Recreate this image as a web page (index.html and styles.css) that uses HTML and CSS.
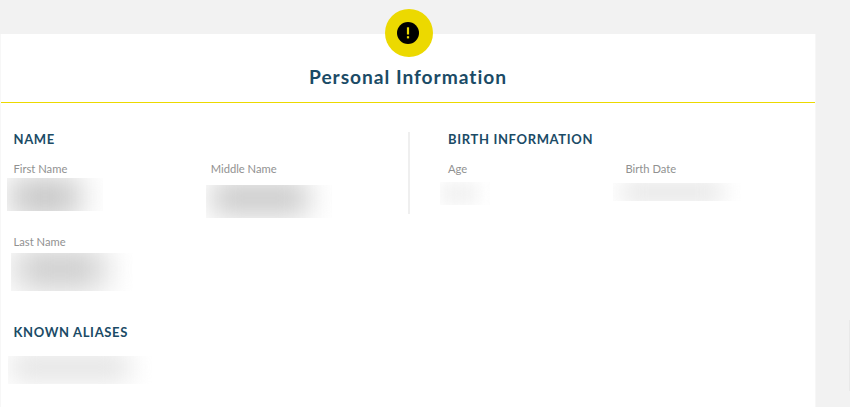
FILE: index.html
```
<!DOCTYPE html>
<html lang="en">
  <head>
    <meta charset="UTF-8" />
    <meta name="viewport" content="width=device-width, initial-scale=1.0" />
    <title>Personal Information</title>
    <link rel="stylesheet" href="styles.css">
  </head>
  <body>
    <div class="card">
      <div class="card-header">
        <div class="badge">
          <svg width="22" height="22" viewBox="0 0 22 22">
            <circle cx="11" cy="11" r="11" fill="#000" />
            <rect x="9.9" y="5.3" width="2.2" height="7.2" fill="#ecd900" />
            <rect x="9.9" y="14.2" width="2.2" height="2.2" fill="#ecd900" />
          </svg>
        </div>
        <h1>Personal Information</h1>
      </div>
      <div class="card-body">
        <div class="columns">
          <div class="column name">
            <h2>Name</h2>
            <div class="fields">
              <div class="field">
                <label>First Name</label>
                <div class="value first-name"><span></span></div>
              </div>
              <div class="field">
                <label>Middle Name</label>
                <div class="value middle-name"><span></span></div>
              </div>
              <div class="field">
                <label>Last Name</label>
                <div class="value last-name"><span></span></div>
              </div>
            </div>
          </div>
          <div class="column birth">
            <h2>Birth Information</h2>
            <div class="fields">
              <div class="field">
                <label>Age</label>
                <div class="value age"><span></span></div>
              </div>
              <div class="field">
                <label>Birth Date</label>
                <div class="value birth-date"><span></span></div>
              </div>
            </div>
          </div>
        </div>
        <div class="aliases">
          <h2>Known Aliases</h2>
          <div class="value alias"><span></span></div>
        </div>
      </div>
    </div>
    <div class="side-tab"></div>
  </body>
</html>
```

FILE: styles.css
```
* {
  box-sizing: border-box;
}
body {
  display: flex;
  justify-content: space-between;
  background-color: #f2f2f2;
  font-family: Lato, sans-serif;
  margin: 0;
  padding-top: 34px;
  height: 407px;
  overflow: hidden;
}
.card {
  width: 816px;
  height: 373px;
  background: #fff;
  border-left: 1px solid #f7f7f7;
  border-right: 1px solid #f7f7f7;
}
.side-tab {
  width: 1px;
  height: 71px;
  margin-top: 286px;
  background: #e9e9e9;
}
.card-header {
  display: flex;
  flex-direction: column;
  align-items: center;
  height: 69px;
  border-bottom: 1px solid #ecd900;
}
.badge {
  display: flex;
  flex-shrink: 0;
  align-items: center;
  justify-content: center;
  width: 48px;
  height: 48px;
  margin: -25px 0 0 1px;
  border-radius: 50%;
  background: #ecd900;
}
.badge svg {
  margin: -1px 1px 0 0;
}
h1 {
  margin: 8px 0 0;
  font-size: 19.2px;
  line-height: 24px;
  font-weight: 700;
  letter-spacing: 0.96px;
  color: #1b4b66;
}
h2 {
  margin: 0;
  font-size: 13px;
  line-height: 16px;
  font-weight: 700;
  letter-spacing: 0.65px;
  text-transform: uppercase;
  color: #1b4b66;
}
.card-body {
  padding: 29px 0 0 12.5px;
}
.columns {
  display: flex;
  align-items: flex-start;
  height: 192px;
}
.name {
  width: 394.5px;
  margin-top: -1px;
}
.birth {
  flex: 1;
  height: 82px;
  padding-left: 38px;
  border-left: 2px solid #efefef;
}
.birth h2 {
  margin-top: -1px;
}
.fields {
  display: flex;
  flex-wrap: wrap;
  padding-top: 15px;
}
.field {
  width: 197.2px;
  height: 73px;
}
.birth .field {
  width: 177.4px;
}
label {
  display: block;
  font-size: 11.2px;
  line-height: 14px;
  color: #919191;
}
/* hidden values */
.value {
  overflow: hidden;
}
.value span {
  display: block;
}
.first-name {
  width: 96px;
  height: 33px;
  margin: 2px 0 0 -6.5px;
}
.first-name span {
  width: 70px;
  height: 38px;
  margin: 0 0 0 3px;
  background: #c4c4c4;
  filter: blur(15px);
}
.middle-name {
  width: 126px;
  height: 33px;
  margin: 9px 0 0 -4.5px;
}
.middle-name span {
  width: 96px;
  height: 34px;
  margin: -4px 0 0 6px;
  background: #c9c9c9;
  filter: blur(14px);
}
.last-name {
  width: 122px;
  height: 38px;
  margin: 4px 0 0 -2.5px;
}
.last-name span {
  width: 88px;
  height: 38px;
  margin: -3px 0 0 5px;
  background: #c9c9c9;
  filter: blur(16px);
}
.age {
  width: 50px;
  height: 23px;
  margin: 6px 0 0 -8px;
}
.age span {
  width: 38px;
  height: 23px;
  background: #f1f1f1;
  filter: blur(9px);
}
.birth-date {
  width: 128px;
  height: 18px;
  margin: 7px 0 0 -12px;
}
.birth-date span {
  width: 100px;
  height: 24px;
  margin: -3px 0 0 9px;
  background: #e7e7e7;
  filter: blur(11px);
}
.alias {
  width: 144px;
  height: 28px;
  margin: 16px 0 0 -5.5px;
}
.alias span {
  width: 118px;
  height: 28px;
  margin: -3px 0 0 3px;
  background: #e3e3e3;
  filter: blur(13px);
}
```
